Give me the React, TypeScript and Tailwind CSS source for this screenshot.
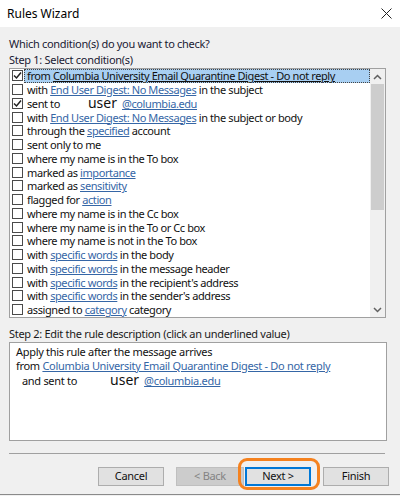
import React from "react";

const L = ({ children }: { children: React.ReactNode }) => (
  <span className="text-[#3566a6] underline underline-offset-[1px]">{children}</span>
);

type Row = { content: React.ReactNode; checked?: boolean; selected?: boolean };

const rows: Row[] = [
  {
    content: (
      <>
        from <span className="underline underline-offset-[1px]">Columbia University Email Quarantine Digest - Do not reply</span>
      </>
    ),
    checked: true,
    selected: true,
  },
  { content: (<>with <L>End User Digest: No Messages</L> in the subject</>) },
  {
    content: (
      <>
        sent to
        <span className="inline-block w-[28px]" />
        <span className="text-[14px] leading-none tracking-normal">user</span>
        <span className="inline-block w-[5px]" />
        <L>@columbia.edu</L>
      </>
    ),
    checked: true,
  },
  { content: (<>with <L>End User Digest: No Messages</L> in the subject or body</>) },
  { content: (<>through the <L>specified</L> account</>) },
  { content: <>sent only to me</> },
  { content: <>where my name is in the To box</> },
  { content: (<>marked as <L>importance</L></>) },
  { content: (<>marked as <L>sensitivity</L></>) },
  { content: (<>flagged for <L>action</L></>) },
  { content: <>where my name is in the Cc box</> },
  { content: <>where my name is in the To or Cc box</> },
  { content: <>where my name is not in the To box</> },
  { content: (<>with <L>specific words</L> in the body</>) },
  { content: (<>with <L>specific words</L> in the message header</>) },
  { content: (<>with <L>specific words</L> in the recipient's address</>) },
  { content: (<>with <L>specific words</L> in the sender's address</>) },
  { content: (<>assigned to <L>category</L> category</>) },
];

function CheckBox({ checked }: { checked?: boolean }) {
  return (
    <div className="w-[11px] h-[11px] border border-[#4a4a4a] bg-white flex items-center justify-center shrink-0">
      {checked && (
        <svg width="9" height="9" viewBox="0 0 9 9">
          <path d="M1 4.5 L3.5 7 L8 1.5" fill="none" stroke="#222" strokeWidth="1.5" />
        </svg>
      )}
    </div>
  );
}

function Btn({ children, w, variant }: { children: React.ReactNode; w: string; variant?: "disabled" | "default" }) {
  const cls =
    variant === "disabled"
      ? "bg-[#cccccc] border-[#bfbfbf] text-[#838383]"
      : variant === "default"
      ? "bg-[#e1e1e1] border-[#0078d7] border-2 text-[#111]"
      : "bg-[#e1e1e1] border-[#adadad] text-[#111]";
  return (
    <div className={`${w} h-[19px] border flex items-center justify-center text-[11px] ${cls}`}>{children}</div>
  );
}

export default function App() {
  return (
    <div
      className="relative w-[400px] h-[496px] bg-[#f0f0f0] overflow-hidden text-[#111] tracking-[-0.3px]"
      style={{ fontFamily: '"Noto Sans", "Open Sans", sans-serif' }}
    >
      {/* title bar */}
      <div className="h-[27px] bg-white flex items-center justify-between pl-[7px] pr-[8px]">
        <span className="text-[12px] text-black tracking-normal">Rules Wizard</span>
        <svg width="11" height="11" viewBox="0 0 11 11">
          <path d="M0.5 0.5 L10.5 10.5 M10.5 0.5 L0.5 10.5" stroke="#222" strokeWidth="1" />
        </svg>
      </div>

      <div className="px-[9px]">
        <div className="mt-[9px] h-[15px] leading-[15px] text-[11px] text-[#1a1a33]">
          Which condition(s) do you want to check?
        </div>
        <div className="mt-[1px] h-[15px] leading-[15px] text-[11px] text-[#1a1a33]">Step 1: Select condition(s)</div>

        {/* listbox */}
        <div className="mt-[1px] w-[377px] h-[250px] border border-[#a0a0a0] bg-white flex">
          <div className="flex-1 flex flex-col">
            {rows.map((r, i) => (
              <div key={i} className="h-[13.75px] flex items-center pl-[2px] shrink-0">
                <CheckBox checked={r.checked} />
                <div
                  className={`ml-[1px] h-full flex items-center pl-[3px] whitespace-nowrap text-[11px] leading-[13px] tracking-[-0.4px] ${
                    r.selected ? "flex-1 bg-[#a8cff2] outline outline-1 outline-dotted outline-[#444] -outline-offset-1" : ""
                  }`}
                >
                  <span>{r.content}</span>
                </div>
              </div>
            ))}
          </div>
          {/* scrollbar */}
          <div className="w-[15px] bg-[#f0f0f0] flex flex-col">
            <div className="h-[15px] flex items-center justify-center">
              <svg width="9" height="6" viewBox="0 0 9 6">
                <path d="M1 5 L4.5 1.5 L8 5" fill="none" stroke="#606060" strokeWidth="1.5" />
              </svg>
            </div>
            <div className="mx-[1px] h-[126px] bg-[#cdcdcd]" />
            <div className="flex-1" />
            <div className="h-[15px] flex items-center justify-center">
              <svg width="9" height="6" viewBox="0 0 9 6">
                <path d="M1 1 L4.5 4.5 L8 1" fill="none" stroke="#606060" strokeWidth="1.5" />
              </svg>
            </div>
          </div>
        </div>

        <div className="mt-[8px] h-[15px] leading-[15px] text-[11px] text-[#1a1a1a]">
          Step 2: Edit the rule description (click an underlined value)
        </div>

        {/* description */}
        <div className="mt-[1px] w-[378px] h-[99px] border border-[#a0a0a0] bg-white pt-[2px] pl-[6px] text-[11px] leading-[14px] whitespace-nowrap">
          <div>Apply this rule after the message arrives</div>
          <div>
            from <L>Columbia University Email Quarantine Digest - Do not reply</L>
          </div>
          <div className="pl-[6px]">
            <span>and sent to</span>
            <span className="inline-block w-[33px]" />
            <span className="text-[14px] leading-none tracking-normal">user</span>
            <span className="inline-block w-[5px]" />
            <L>@columbia.edu</L>
          </div>
        </div>

        {/* separator */}
        <div className="mt-[12px] w-[376px] h-[1px] bg-[#a0a0a0]" />

        {/* buttons */}
        <div className="mt-[13px] flex pl-[89px]">
          <Btn w="w-[66px]">Cancel</Btn>
          <div className="w-[12px]" />
          <Btn w="w-[68px]" variant="disabled">
            &lt; Back
          </Btn>
          <div className="w-[1px]" />
          <Btn w="w-[66px]" variant="default">
            Next &gt;
          </Btn>
          <div className="w-[12px]" />
          <Btn w="w-[66px]">Finish</Btn>
        </div>
      </div>

      {/* orange highlight ring */}
      <div className="absolute left-[238px] top-[458px] w-[82px] h-[32px] border-[3px] border-[#f5821f] rounded-[9px]" />

      {/* bottom window edge */}
      <div className="absolute left-0 right-0 top-[494px] h-[1px] bg-[#8a8a8a]" />
    </div>
  );
}
